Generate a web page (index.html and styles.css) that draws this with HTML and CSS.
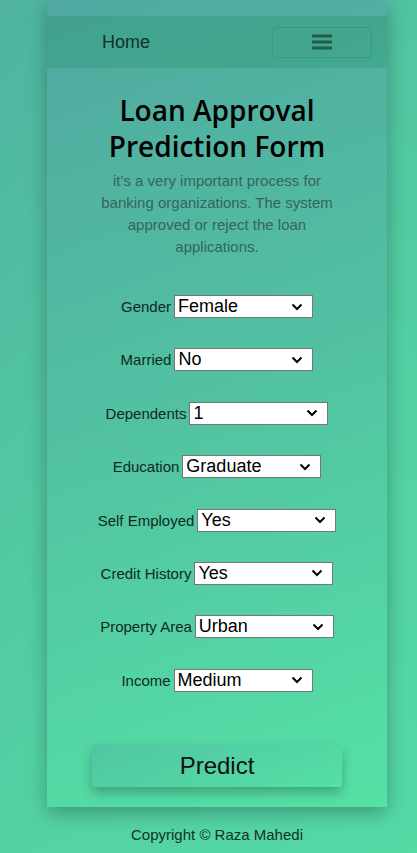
FILE: index.html
```html
<!DOCTYPE html>
<html>
<head>
<meta charset="utf-8">
<link rel="stylesheet" href="styles.css">
</head>
<body>
<div class="card">
  <nav class="navbar">
    <span class="brand">Home</span>
    <button class="toggler" type="button">
      <svg width="22" height="18" viewBox="0 0 22 18"><rect x="1" y="1.5" width="20" height="3" fill="#245c4a"/><rect x="1" y="7.5" width="20" height="3" fill="#245c4a"/><rect x="1" y="13.5" width="20" height="3" fill="#245c4a"/></svg>
    </button>
  </nav>
  <h1 class="title">Loan Approval Prediction Form</h1>
  <p class="desc">it's a very important process for banking organizations. The system approved or reject the loan applications.</p>
  <form class="form">
    <div class="row"><label>Gender</label><select><option>Female</option></select></div>
    <div class="row"><label>Married</label><select><option>No</option></select></div>
    <div class="row"><label>Dependents</label><select><option>1</option></select></div>
    <div class="row"><label>Education</label><select><option>Graduate</option></select></div>
    <div class="row"><label>Self Employed</label><select><option>Yes</option></select></div>
    <div class="row"><label>Credit History</label><select><option>Yes</option></select></div>
    <div class="row"><label>Property Area</label><select><option>Urban</option></select></div>
    <div class="row"><label>Income</label><select><option>Medium</option></select></div>
    <button class="predict" type="button">Predict</button>
  </form>
</div>
<footer class="footer">Copyright © Raza Mahedi</footer>
</body>
</html>
```
FILE: styles.css
```css
html, body {
  margin: 0;
  padding: 0;
}
body {
  background: linear-gradient(135deg, #4fb3a0 0%, #53d0a3 60%, #55d9a5 100%);
  min-height: 853px;
  box-sizing: border-box;
  padding-left: 17px;
  font-family: "Liberation Sans", Arial, sans-serif;
  overflow: hidden;
}
.card {
  width: 340px;
  margin: 0 auto;
  padding: 16px 0 20px;
  box-sizing: border-box;
  background: linear-gradient(160deg, #50a8a0 0%, #52c2a2 50%, #55e2a6 100%);
  box-shadow: 0 6px 18px rgba(0, 0, 0, 0.28);
}
.navbar {
  height: 52px;
  display: flex;
  align-items: center;
  justify-content: space-between;
  padding: 0 15px 0 55px;
  background: rgba(40, 150, 110, 0.35);
}
.brand {
  font-size: 18px;
  color: #13302a;
}
.toggler {
  width: 100px;
  height: 31px;
  display: flex;
  align-items: center;
  justify-content: center;
  background: transparent;
  border: 1px solid rgba(0, 0, 0, 0.09);
  border-radius: 4px;
  padding: 0;
}
.title {
  margin: 24px 0 0;
  text-align: center;
  font-family: "Open Sans", "Noto Sans", sans-serif;
  font-weight: 600;
  font-size: 28px;
  line-height: 36px;
  color: #000;
}
.desc {
  width: 245px;
  margin: 6px auto 0;
  text-align: center;
  font-size: 15px;
  line-height: 22px;
  color: #35655a;
}
.form {
  margin-top: 37px;
  display: flex;
  flex-direction: column;
  align-items: center;
  gap: 30.4px;
}
.row {
  display: flex;
  align-items: center;
  justify-content: center;
  gap: 3px;
  height: 23px;
}
.row label {
  font-size: 15px;
  color: #102a22;
}
.row select {
  appearance: none;
  -webkit-appearance: none;
  width: 139px;
  height: 23px;
  box-sizing: border-box;
  border: 1px solid #767676;
  border-radius: 0;
  background: #fff url("data:image/svg+xml,%3Csvg xmlns='http://www.w3.org/2000/svg' width='12' height='8' viewBox='0 0 12 8'%3E%3Cpath d='M1.5 1.5 L6 6 L10.5 1.5' fill='none' stroke='%23000' stroke-width='2'/%3E%3C/svg%3E") no-repeat right 9px center;
  font-family: "Liberation Sans", Arial, sans-serif;
  font-size: 18px;
  color: #000;
  padding: 0 0 0 3px;
  line-height: 21px;
}
.predict {
  margin-top: 23px;
  width: 250px;
  height: 42px;
  border: none;
  border-radius: 4px;
  background: linear-gradient(160deg, #50c6a2, #55dfa6);
  box-shadow: 0 6px 12px rgba(0, 0, 0, 0.25);
  font-family: "Liberation Sans", Arial, sans-serif;
  font-size: 24px;
  color: #111;
}
.footer {
  text-align: center;
  font-size: 15px;
  color: #15302a;
  margin-top: 19px;
}
```
